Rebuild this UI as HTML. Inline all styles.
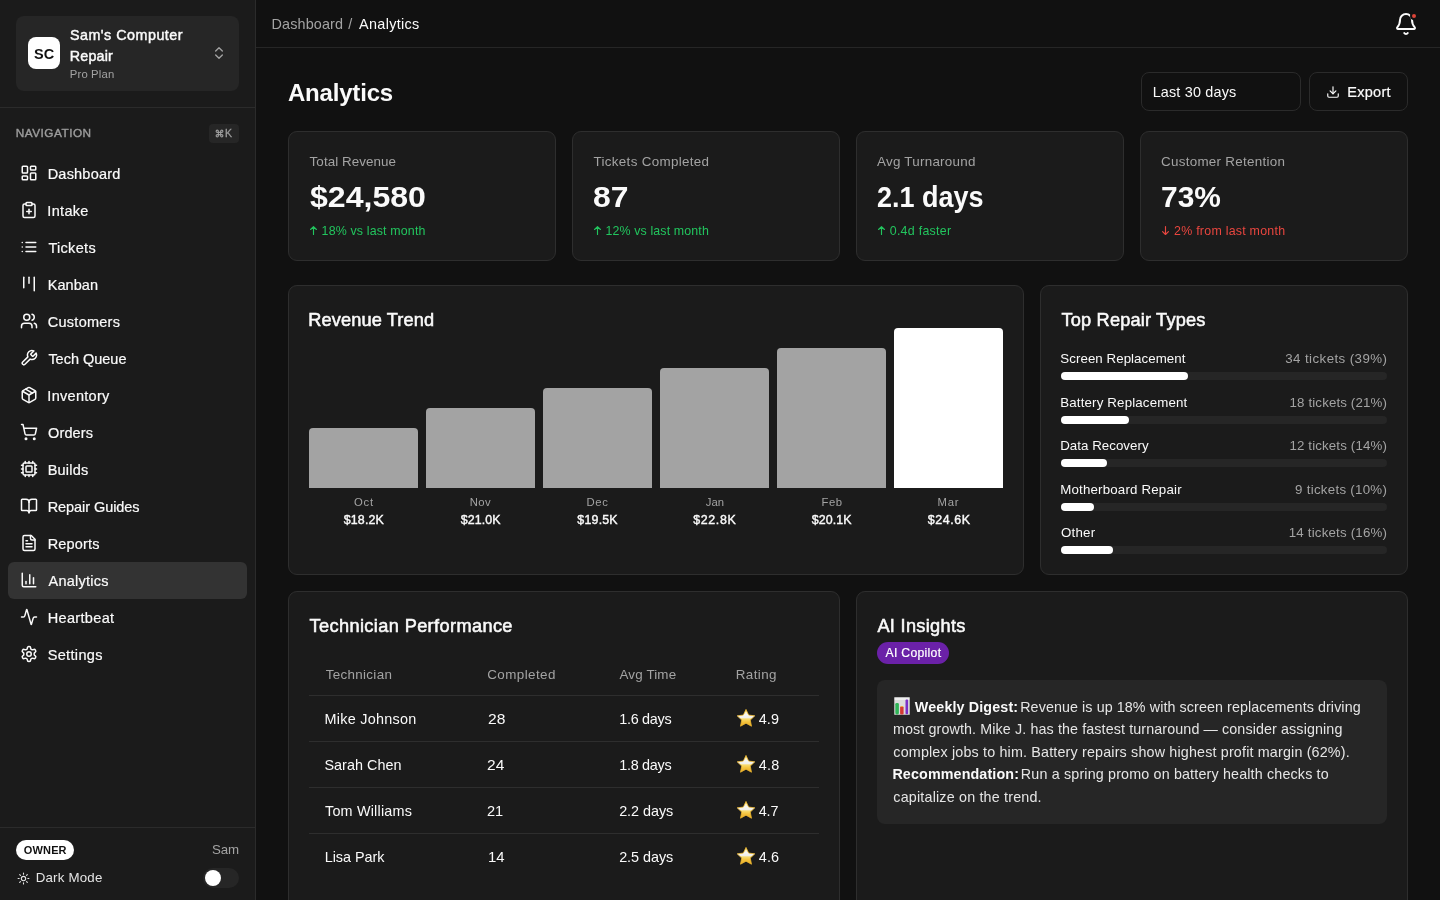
<!DOCTYPE html>
<html lang="en">
<head>
<meta charset="utf-8">
<title>Analytics</title>
<style>
*{box-sizing:border-box;margin:0;padding:0}
html,body{width:1440px;height:900px;overflow:hidden;background:#111111;color:#fafafa;font-family:"Liberation Sans",sans-serif}
#root{position:absolute;left:0;top:0;width:1440px;height:900px;will-change:transform}
svg.i{fill:none;stroke:currentColor;stroke-width:2;stroke-linecap:round;stroke-linejoin:round;display:block;flex:none}
span{white-space:nowrap}
/* ---------- sidebar ---------- */
#sb{position:absolute;left:0;top:0;width:256px;height:900px;background:#1b1b1b;border-right:1px solid #2b2b2b}
#org{position:absolute;left:16px;top:16px;width:223px;height:75px;background:#262626;border-radius:8px}
#logo{position:absolute;left:12px;top:21px;width:32px;height:32px;border-radius:8px;background:#fff;color:#111;font-weight:700;font-size:14px;line-height:34px;padding-left:6px}
#orgname{position:absolute;left:54px;top:9px;font-size:14.3px;line-height:21px;font-weight:400;-webkit-text-stroke:0.45px #fafafa;color:#fafafa;white-space:nowrap}
#orgplan{position:absolute;left:54px;top:50px;font-size:11.3px;line-height:16.5px;color:#a3a3a3}
#orgchev{position:absolute;left:195px;top:29px;color:#a3a3a3}
#sbdiv1{position:absolute;left:0;top:107px;width:255px;height:1px;background:#2b2b2b}
#navlbl{position:absolute;left:16px;top:125px;font-size:11.8px;line-height:16px;font-weight:400;-webkit-text-stroke:0.4px #9c9c9c;color:#9c9c9c}
#kbd{position:absolute;left:209px;top:124px;width:30px;height:19px;border-radius:4px;background:#262626;color:#9c9c9c;font-size:10.5px;line-height:19px;font-weight:400;-webkit-text-stroke:0.3px #9c9c9c}
#kbd svg{position:absolute;left:6px;top:5px}
#kbd span{position:absolute;left:16px;top:0}
#nav{position:absolute;left:8px;top:155px;width:239px}
.ni{position:absolute;left:0;width:239px;height:37px;border-radius:6px;font-size:14.5px;line-height:37px;color:#fafafa;-webkit-text-stroke:0.2px #fafafa}
.ni.on{background:#333333}
.ni svg{position:absolute;left:12px;top:9px}
.ni span{position:absolute;left:40px;top:1px}
#sbdiv2{position:absolute;left:0;top:827px;width:255px;height:1px;background:#2b2b2b}
#owner{position:absolute;left:16px;top:840px;width:58px;height:20px;border-radius:10px;background:#fff;color:#111;font-size:11px;font-weight:700;line-height:20px;padding-left:8px}
#uname{position:absolute;left:212px;top:841px;font-size:13.3px;line-height:18px;color:#a3a3a3}
#dm{position:absolute;left:16px;top:868px;height:20px;font-size:13.3px;line-height:20px;color:#e5e5e5}
#dm svg{position:absolute;left:0.5px;top:3.5px}
#dm span{position:absolute;left:20px;top:0}
#tog{position:absolute;left:203px;top:868px;width:36px;height:20px;border-radius:10px;background:#262626}
#tog i{position:absolute;left:2px;top:2px;width:16px;height:16px;border-radius:50%;background:#fff}
/* ---------- topbar ---------- */
#tb{position:absolute;left:256px;top:0;width:1184px;height:48px;border-bottom:1px solid #262626;background:#111}
#bc{position:absolute;left:0;top:14px;font-size:14.4px;line-height:20px;color:#a3a3a3;white-space:nowrap}
#bc span{position:absolute;top:0}
#bc1{left:16px}#bc2{left:92px}#bc3{left:103px;color:#fafafa}
#bell{position:absolute;left:1138px;top:12px;color:#fafafa}
#dot{position:absolute;left:1154px;top:12px;width:8px;height:8px;border-radius:50%;background:#dc4438;border:2px solid #111}
/* ---------- main ---------- */
#main{position:absolute;left:256px;top:48px;width:1184px;height:852px;overflow:hidden}
#h1{position:absolute;left:32px;top:29px;font-size:24px;line-height:32px;font-weight:700;color:#fafafa;white-space:nowrap}
#sel{position:absolute;left:885px;top:24px;width:160px;height:39px;border:1px solid #2b2b2b;border-radius:8px;font-size:14.4px;line-height:39px;padding-left:12px;color:#fafafa;white-space:nowrap}
#exp{position:absolute;left:1053px;top:24px;width:99px;height:39px;border:1px solid #2b2b2b;border-radius:8px;font-size:14.5px;line-height:39px;color:#fafafa;white-space:nowrap;-webkit-text-stroke:0.2px #fafafa}
#exp svg{position:absolute;left:16px;top:12px}
#exp span{position:absolute;left:38px;top:0}
.card{position:absolute;background:#1b1b1b;border:1px solid #2e2e2e;border-radius:9px}
.st{top:83px;width:268px;height:130px}
.st .l{position:absolute;left:20px;top:20px;font-size:13.4px;line-height:20px;color:#a3a3a3;white-space:nowrap}
.st .v{position:absolute;left:20px;top:44px;font-size:28.6px;line-height:42px;font-weight:700;color:#fafafa;white-space:nowrap}
.st .d{position:absolute;left:20px;top:90px;font-size:12.4px;line-height:18px;color:#22c55e;white-space:nowrap}
.st .d.dn{color:#e9463f}
.st .d svg{position:absolute;left:0;top:3px;fill:none;stroke:currentColor;stroke-width:1.15;stroke-linecap:round;stroke-linejoin:round}
.st .d span{position:absolute;left:13px;top:0}
.ct{position:absolute;left:20px;top:21px;font-size:18.2px;line-height:27px;font-weight:400;-webkit-text-stroke:0.55px #fafafa;color:#fafafa;white-space:nowrap}
#rev{left:32px;top:237px;width:736px;height:290px}
.bar{position:absolute;width:109px;background:#a3a3a3;border-radius:4px 4px 0 0}
.bar.hi{background:#ffffff}
.bl{position:absolute;top:208px;width:109px;white-space:nowrap}
.bl .m{position:absolute;left:40px;top:0;font-size:11.3px;line-height:16px;color:#a3a3a3}
.bl .a{position:absolute;left:34px;top:17px;font-size:12.4px;line-height:18px;font-weight:400;-webkit-text-stroke:0.4px #fafafa;color:#fafafa}
#top{left:784px;top:237px;width:368px;height:290px}
.rr{position:absolute;left:20px;width:326px;height:32px}
.rr .n{position:absolute;left:0;top:1px;font-size:13.3px;line-height:20px;color:#fafafa;white-space:nowrap}
.rr .c{position:absolute;right:0;top:1px;font-size:13.3px;line-height:20px;color:#a3a3a3;white-space:nowrap}
.rr .t{position:absolute;left:0;top:24px;width:326px;height:8px;border-radius:4px;background:#262626}
.rr .f{position:absolute;left:0;top:24px;height:8px;border-radius:4px;background:#ffffff}
#tech{left:32px;top:543px;width:552px;height:330px}
#tbl{position:absolute;left:20px;top:58px;width:510px}
.tr{position:relative;height:46px;border-bottom:1px solid #2e2e2e;font-size:14.4px;line-height:47px;color:#fafafa;white-space:nowrap}
.tr.h{color:#a3a3a3;font-size:13.4px;line-height:50.5px}
.tr.last{border-bottom:0}
.tr div{position:absolute;top:0}
.c1{left:16px}.c2{left:178px}.c3{left:310px}.c4{left:427px}
.star{position:absolute;left:1px;top:13px;overflow:visible}
.c4 span{position:absolute;left:22px;top:0}
#ai{left:600px;top:543px;width:552px;height:330px}
#badge{position:absolute;left:20px;top:50px;width:72px;height:22px;border-radius:11px;background:#6b21a8;color:#fff;font-size:12.2px;line-height:22px;padding-left:9px;-webkit-text-stroke:0.2px #fff;white-space:nowrap}
#box{position:absolute;left:20px;top:88px;width:510px;height:144px;border-radius:8px;background:#262626;padding:16px;font-size:14.3px;line-height:22.4px;color:#e5e5e5}
#box b{color:#fafafa;font-weight:700}
#box .ln{white-space:nowrap;height:22.4px}
#box .em{display:inline-block;vertical-align:-3px;margin-left:1px;margin-right:4px}
.sp{margin-left:4px}

/* per-text tuning */
#n0{letter-spacing:0.213px;margin-left:-0.33px}
#n1{letter-spacing:0.317px;margin-left:-0.68px}
#n2{letter-spacing:0.317px;margin-left:0.38px}
#n3{letter-spacing:0.076px;margin-left:-0.33px}
#n4{letter-spacing:0.244px;margin-left:-0.17px}
#n5{letter-spacing:-0.013px;margin-left:0.38px}
#n6{letter-spacing:0.299px;margin-left:-0.68px}
#n7{letter-spacing:0.164px;margin-left:-0.06px}
#n8{letter-spacing:0.217px;margin-left:-0.35px}
#n9{letter-spacing:-0.070px;margin-left:-0.33px}
#n10{letter-spacing:0.177px;margin-left:-0.33px}
#n11{letter-spacing:0.252px;margin-left:0.50px}
#n12{letter-spacing:0.343px;margin-left:-0.33px}
#n13{letter-spacing:0.355px;margin-left:-0.38px}
#on1{letter-spacing:0.509px;margin-left:-0.08px}
#on2{letter-spacing:0.185px;margin-left:-0.22px}
#pp{letter-spacing:0.158px;margin-left:-0.24px}
#nl{letter-spacing:0.491px;margin-left:-0.31px}
#sc{transform:scaleX(1.0356);display:inline-block;transform-origin:left center;margin-left:-0.12px}
#ow{letter-spacing:0.130px;margin-left:-0.15px}
#un{letter-spacing:-0.157px;margin-left:0.12px}
#dmt{letter-spacing:0.210px;margin-left:-0.38px}
#bc1{letter-spacing:0.154px;margin-left:-0.59px}
#bc2{margin-left:0.15px}
#bc3{letter-spacing:0.340px;margin-left:-0.00px}
#h1t{letter-spacing:-0.195px;margin-left:-0.03px}
#selt{letter-spacing:0.180px;margin-left:-1.38px}
#expt{letter-spacing:0.313px;margin-left:-0.84px}
#sl0{letter-spacing:0.071px;margin-left:0.61px}
#sv0{transform:scaleX(1.1217);display:inline-block;transform-origin:left center;margin-left:1.05px}
#sd0{letter-spacing:0.159px;margin-left:-0.41px}
#sl1{letter-spacing:0.325px;margin-left:0.49px}
#sv1{transform:scaleX(1.1143);display:inline-block;transform-origin:left center;margin-left:0.11px}
#sd1{letter-spacing:0.133px;margin-left:-0.57px}
#sl2{letter-spacing:0.256px;margin-left:-0.00px}
#sv2{transform:scaleX(0.9431);display:inline-block;transform-origin:left center;margin-left:0.40px}
#sd2{letter-spacing:0.284px;margin-left:-0.30px}
#sl3{letter-spacing:0.287px;margin-left:0.00px}
#sv3{transform:scaleX(1.0458);display:inline-block;transform-origin:left center;margin-left:-0.28px}
#sd3{letter-spacing:0.248px;margin-left:0.08px}
#ct1{letter-spacing:0.128px;margin-left:-0.75px}
#ct2{letter-spacing:0.176px;margin-left:0.51px}
#ct3{letter-spacing:0.372px;margin-left:0.56px}
#ct4{letter-spacing:0.307px;margin-left:0.41px}
#rn0{letter-spacing:0.053px;margin-left:-0.66px}
#rn1{letter-spacing:0.158px;margin-left:-0.78px}
#rn2{letter-spacing:0.033px;margin-left:-0.78px}
#rn3{letter-spacing:0.181px;margin-left:-0.78px}
#rn4{letter-spacing:0.245px;margin-left:-0.06px}
#rc0{letter-spacing:0.424px;margin-right:-0.36px}
#rc1{letter-spacing:0.129px;margin-right:0.00px}
#rc2{letter-spacing:0.140px;margin-right:0.00px}
#rc3{letter-spacing:0.279px;margin-right:-0.18px}
#rc4{letter-spacing:0.195px;margin-right:-0.18px}
#th1{letter-spacing:0.325px;margin-left:0.67px}
#th2{letter-spacing:0.412px;margin-left:0.29px}
#th3{letter-spacing:0.156px;margin-left:0.47px}
#th4{letter-spacing:0.420px;margin-left:-0.33px}
#t0a{letter-spacing:0.264px;margin-left:-0.54px}
#t1a{letter-spacing:0.032px;margin-left:-0.59px}
#t2a{letter-spacing:0.188px;margin-left:0.04px}
#t3a{letter-spacing:-0.018px;margin-left:-0.35px}
#t0b{transform:scaleX(1.0863);display:inline-block;transform-origin:left center;margin-left:0.62px}
#t1b{transform:scaleX(1.0779);display:inline-block;transform-origin:left center;margin-left:-0.05px}
#t2b{transform:scaleX(1.0134);display:inline-block;transform-origin:left center;margin-left:-0.08px}
#t3b{transform:scaleX(1.0368);display:inline-block;transform-origin:left center;margin-left:0.98px}
#t0c{letter-spacing:-0.286px;margin-left:0.22px}
#t1c{letter-spacing:-0.286px;margin-left:0.22px}
#t2c{letter-spacing:-0.039px;margin-left:0.13px}
#t3c{letter-spacing:-0.039px;margin-left:0.13px}
#t0d{letter-spacing:0.125px;margin-left:0.63px}
#t1d{letter-spacing:0.261px;margin-left:0.63px}
#t2d{letter-spacing:-0.099px;margin-left:0.63px}
#t3d{letter-spacing:0.248px;margin-left:0.63px}
#bdg{letter-spacing:0.296px;margin-left:-0.46px}
#a1b{letter-spacing:0.135px;margin-left:0.87px}
#a1{letter-spacing:0.087px;margin-left:2.00px}
#a2{letter-spacing:0.112px;margin-left:0.02px}
#a3{letter-spacing:0.176px;margin-left:0.35px}
#a4b{letter-spacing:0.129px;margin-left:-0.60px}
#a4{letter-spacing:0.166px;margin-left:1.78px}
#a5{letter-spacing:0.189px;margin-left:0.35px}
#bm0{letter-spacing:0.791px;margin-left:4.94px}
#ba0{letter-spacing:0.171px;margin-left:0.75px}
#bm1{letter-spacing:0.322px;margin-left:3.85px}
#ba1{letter-spacing:0.112px;margin-left:0.75px}
#bm2{letter-spacing:0.680px;margin-left:3.52px}
#ba2{letter-spacing:0.203px;margin-left:0.35px}
#bm3{letter-spacing:0.125px;margin-left:5.69px}
#ba3{letter-spacing:0.603px;margin-left:-0.65px}
#bm4{letter-spacing:0.611px;margin-left:4.40px}
#ba4{letter-spacing:0.112px;margin-left:0.75px}
#bm5{letter-spacing:0.720px;margin-left:3.54px}
#ba5{letter-spacing:0.589px;margin-left:-0.25px}
</style>
</head>
<body>
<div id="root">
<div id="sb">
  <div id="org">
    <div id="logo"><span id="sc">SC</span></div>
    <div id="orgname"><span id="on1">Sam's Computer</span><br><span id="on2">Repair</span></div>
    <div id="orgplan"><span id="pp">Pro Plan</span></div>
    <svg class="i" width="16" height="16" viewBox="0 0 24 24" id="orgchev"><path d="m7 15 5 5 5-5"/><path d="m7 9 5-5 5 5"/></svg>
  </div>
  <div id="sbdiv1"></div>
  <div id="navlbl"><span id="nl">NAVIGATION</span></div>
  <div id="kbd"><svg width="9" height="9" viewBox="0 0 24 24" fill="none" stroke="currentColor" stroke-width="3" stroke-linecap="round" stroke-linejoin="round"><path d="M15 6v12a3 3 0 1 0 3-3H6a3 3 0 1 0 3 3V6a3 3 0 1 0-3 3h12a3 3 0 1 0-3-3"/></svg><span id="kk">K</span></div>
  <div id="nav">
    <div class="ni" style="top:0px"><svg class="i" width="18" height="18" viewBox="0 0 24 24"><rect width="7" height="9" x="3" y="3" rx="1"/><rect width="7" height="5" x="14" y="3" rx="1"/><rect width="7" height="9" x="14" y="12" rx="1"/><rect width="7" height="5" x="3" y="16" rx="1"/></svg><span id="n0">Dashboard</span></div>
    <div class="ni" style="top:37px"><svg class="i" width="18" height="18" viewBox="0 0 24 24"><rect width="8" height="4" x="8" y="2" rx="1" ry="1"/><path d="M16 4h2a2 2 0 0 1 2 2v14a2 2 0 0 1-2 2H6a2 2 0 0 1-2-2V6a2 2 0 0 1 2-2h2"/><path d="M9 14h6"/><path d="M12 17v-6"/></svg><span id="n1">Intake</span></div>
    <div class="ni" style="top:74px"><svg class="i" width="18" height="18" viewBox="0 0 24 24"><path d="M8 6h13"/><path d="M8 12h13"/><path d="M8 18h13"/><path d="M3 6h.01"/><path d="M3 12h.01"/><path d="M3 18h.01"/></svg><span id="n2">Tickets</span></div>
    <div class="ni" style="top:111px"><svg class="i" width="18" height="18" viewBox="0 0 24 24"><path d="M5 3v14"/><path d="M12 3v8"/><path d="M19 3v18"/></svg><span id="n3">Kanban</span></div>
    <div class="ni" style="top:148px"><svg class="i" width="18" height="18" viewBox="0 0 24 24"><path d="M16 21v-2a4 4 0 0 0-4-4H6a4 4 0 0 0-4 4v2"/><circle cx="9" cy="7" r="4"/><path d="M22 21v-2a4 4 0 0 0-3-3.87"/><path d="M16 3.13a4 4 0 0 1 0 7.75"/></svg><span id="n4">Customers</span></div>
    <div class="ni" style="top:185px"><svg class="i" width="18" height="18" viewBox="0 0 24 24"><path d="M14.7 6.3a1 1 0 0 0 0 1.4l1.6 1.6a1 1 0 0 0 1.4 0l3.77-3.77a6 6 0 0 1-7.94 7.94l-6.91 6.91a2.12 2.12 0 0 1-3-3l6.91-6.91a6 6 0 0 1 7.94-7.94l-3.76 3.76z"/></svg><span id="n5">Tech Queue</span></div>
    <div class="ni" style="top:222px"><svg class="i" width="18" height="18" viewBox="0 0 24 24"><path d="m7.5 4.27 9 5.15"/><path d="M21 8a2 2 0 0 0-1-1.73l-7-4a2 2 0 0 0-2 0l-7 4A2 2 0 0 0 3 8v8a2 2 0 0 0 1 1.73l7 4a2 2 0 0 0 2 0l7-4A2 2 0 0 0 21 16Z"/><path d="m3.3 7 8.7 5 8.7-5"/><path d="M12 22V12"/></svg><span id="n6">Inventory</span></div>
    <div class="ni" style="top:259px"><svg class="i" width="18" height="18" viewBox="0 0 24 24"><circle cx="8" cy="21" r="1"/><circle cx="19" cy="21" r="1"/><path d="M2.05 2.05h2l2.66 12.42a2 2 0 0 0 2 1.58h9.78a2 2 0 0 0 1.95-1.57l1.65-7.43H5.12"/></svg><span id="n7">Orders</span></div>
    <div class="ni" style="top:296px"><svg class="i" width="18" height="18" viewBox="0 0 24 24"><path d="M12 20v2"/><path d="M12 2v2"/><path d="M17 20v2"/><path d="M17 2v2"/><path d="M2 12h2"/><path d="M2 17h2"/><path d="M2 7h2"/><path d="M20 12h2"/><path d="M20 17h2"/><path d="M20 7h2"/><path d="M7 20v2"/><path d="M7 2v2"/><rect x="4" y="4" width="16" height="16" rx="2"/><rect x="8" y="8" width="8" height="8" rx="1"/></svg><span id="n8">Builds</span></div>
    <div class="ni" style="top:333px"><svg class="i" width="18" height="18" viewBox="0 0 24 24"><path d="M12 7v14"/><path d="M3 18a1 1 0 0 1-1-1V4a1 1 0 0 1 1-1h5a4 4 0 0 1 4 4 4 4 0 0 1 4-4h5a1 1 0 0 1 1 1v13a1 1 0 0 1-1 1h-6a3 3 0 0 0-3 3 3 3 0 0 0-3-3z"/></svg><span id="n9">Repair Guides</span></div>
    <div class="ni" style="top:370px"><svg class="i" width="18" height="18" viewBox="0 0 24 24"><path d="M15 2H6a2 2 0 0 0-2 2v16a2 2 0 0 0 2 2h12a2 2 0 0 0 2-2V7Z"/><path d="M14 2v4a2 2 0 0 0 2 2h4"/><path d="M10 9H8"/><path d="M16 13H8"/><path d="M16 17H8"/></svg><span id="n10">Reports</span></div>
    <div class="ni on" style="top:407px"><svg class="i" width="18" height="18" viewBox="0 0 24 24"><path d="M3 3v16a2 2 0 0 0 2 2h16"/><path d="M18 17V9"/><path d="M13 17V5"/><path d="M8 17v-3"/></svg><span id="n11">Analytics</span></div>
    <div class="ni" style="top:444px"><svg class="i" width="18" height="18" viewBox="0 0 24 24"><path d="M22 12h-2.48a2 2 0 0 0-1.93 1.46l-2.35 8.36a.25.25 0 0 1-.48 0L9.24 2.18a.25.25 0 0 0-.48 0l-2.35 8.36A2 2 0 0 1 4.49 12H2"/></svg><span id="n12">Heartbeat</span></div>
    <div class="ni" style="top:481px"><svg class="i" width="18" height="18" viewBox="0 0 24 24"><path d="M12.22 2h-.44a2 2 0 0 0-2 2v.18a2 2 0 0 1-1 1.73l-.43.25a2 2 0 0 1-2 0l-.15-.08a2 2 0 0 0-2.73.73l-.22.38a2 2 0 0 0 .73 2.73l.15.1a2 2 0 0 1 1 1.72v.51a2 2 0 0 1-1 1.74l-.15.09a2 2 0 0 0-.73 2.73l.22.38a2 2 0 0 0 2.73.73l.15-.08a2 2 0 0 1 2 0l.43.25a2 2 0 0 1 1 1.73V20a2 2 0 0 0 2 2h.44a2 2 0 0 0 2-2v-.18a2 2 0 0 1 1-1.73l.43-.25a2 2 0 0 1 2 0l.15.08a2 2 0 0 0 2.73-.73l.22-.39a2 2 0 0 0-.73-2.73l-.15-.08a2 2 0 0 1-1-1.74v-.5a2 2 0 0 1 1-1.74l.15-.09a2 2 0 0 0 .73-2.73l-.22-.38a2 2 0 0 0-2.73-.73l-.15.08a2 2 0 0 1-2 0l-.43-.25a2 2 0 0 1-1-1.73V4a2 2 0 0 0-2-2z"/><circle cx="12" cy="12" r="3"/></svg><span id="n13">Settings</span></div>
  </div>
  <div id="sbdiv2"></div>
  <div id="owner"><span id="ow">OWNER</span></div>
  <div id="uname"><span id="un">Sam</span></div>
  <div id="dm"><svg class="i" width="13" height="13" viewBox="0 0 24 24"><circle cx="12" cy="12" r="4"/><path d="M12 2v2"/><path d="M12 20v2"/><path d="m4.93 4.93 1.41 1.41"/><path d="m17.66 17.66 1.41 1.41"/><path d="M2 12h2"/><path d="M20 12h2"/><path d="m6.34 17.66-1.41 1.41"/><path d="m19.07 4.93-1.41 1.41"/></svg><span id="dmt">Dark Mode</span></div>
  <div id="tog"><i></i></div>
</div>

<div id="tb">
  <div id="bc"><span id="bc1">Dashboard</span><span id="bc2">/</span><span id="bc3">Analytics</span></div>
  <svg class="i" width="24" height="24" viewBox="0 0 24 24" id="bell"><path d="M10.268 21a2 2 0 0 0 3.464 0"/><path d="M3.262 15.326A1 1 0 0 0 4 17h16a1 1 0 0 0 .74-1.673C19.41 13.956 18 12.499 18 8A6 6 0 0 0 6 8c0 4.499-1.411 5.956-2.738 7.326"/></svg>
  <div id="dot"></div>
</div>

<div id="main">
<div id="h1"><span id="h1t">Analytics</span></div>
<div id="sel"><span id="selt">Last 30 days</span></div>
<div id="exp"><svg class="i" width="14" height="14" viewBox="0 0 24 24"><path d="M21 15v4a2 2 0 0 1-2 2H5a2 2 0 0 1-2-2v-4"/><path d="m7 10 5 5 5-5"/><path d="M12 15V3"/></svg><span id="expt">Export</span></div>
<div class="card st" style="left:32px"><div class="l"><span id="sl0">Total Revenue</span></div><div class="v"><span id="sv0">$24,580</span></div><div class="d"><svg class="ar" width="9" height="11" viewBox="0 0 9 11"><path d="M4.5 9.5V1.6M1.6 4.5 4.5 1.6l2.9 2.9"/></svg><span id="sd0">18% vs last month</span></div></div>
<div class="card st" style="left:316px"><div class="l"><span id="sl1">Tickets Completed</span></div><div class="v"><span id="sv1">87</span></div><div class="d"><svg class="ar" width="9" height="11" viewBox="0 0 9 11"><path d="M4.5 9.5V1.6M1.6 4.5 4.5 1.6l2.9 2.9"/></svg><span id="sd1">12% vs last month</span></div></div>
<div class="card st" style="left:600px"><div class="l"><span id="sl2">Avg Turnaround</span></div><div class="v"><span id="sv2">2.1 days</span></div><div class="d"><svg class="ar" width="9" height="11" viewBox="0 0 9 11"><path d="M4.5 9.5V1.6M1.6 4.5 4.5 1.6l2.9 2.9"/></svg><span id="sd2">0.4d faster</span></div></div>
<div class="card st" style="left:884px"><div class="l"><span id="sl3">Customer Retention</span></div><div class="v"><span id="sv3">73%</span></div><div class="d dn"><svg class="ar" width="9" height="11" viewBox="0 0 9 11"><path d="M4.5 1.6V9.5M1.6 6.6 4.5 9.5l2.9-2.9"/></svg><span id="sd3">2% from last month</span></div></div>

<div class="card" id="rev">
  <div class="ct"><span id="ct1">Revenue Trend</span></div>
  <div class="bar" style="left:20px;top:142px;height:60px"></div>
  <div class="bl" style="left:20px"><div class="m"><span id="bm0">Oct</span></div><div class="a"><span id="ba0">$18.2K</span></div></div>
  <div class="bar" style="left:137px;top:122px;height:80px"></div>
  <div class="bl" style="left:137px"><div class="m"><span id="bm1">Nov</span></div><div class="a"><span id="ba1">$21.0K</span></div></div>
  <div class="bar" style="left:254px;top:102px;height:100px"></div>
  <div class="bl" style="left:254px"><div class="m"><span id="bm2">Dec</span></div><div class="a"><span id="ba2">$19.5K</span></div></div>
  <div class="bar" style="left:371px;top:82px;height:120px"></div>
  <div class="bl" style="left:371px"><div class="m"><span id="bm3">Jan</span></div><div class="a"><span id="ba3">$22.8K</span></div></div>
  <div class="bar" style="left:488px;top:62px;height:140px"></div>
  <div class="bl" style="left:488px"><div class="m"><span id="bm4">Feb</span></div><div class="a"><span id="ba4">$20.1K</span></div></div>
  <div class="bar hi" style="left:605px;top:42px;height:160px"></div>
  <div class="bl" style="left:605px"><div class="m"><span id="bm5">Mar</span></div><div class="a"><span id="ba5">$24.6K</span></div></div>
</div>
<div class="card" id="top">
  <div class="ct"><span id="ct2">Top Repair Types</span></div>
  <div class="rr" style="top:62.0px"><div class="n"><span id="rn0">Screen Replacement</span></div><div class="c"><span id="rc0">34 tickets (39%)</span></div><div class="t"></div><div class="f" style="width:127px"></div></div>
  <div class="rr" style="top:105.5px"><div class="n"><span id="rn1">Battery Replacement</span></div><div class="c"><span id="rc1">18 tickets (21%)</span></div><div class="t"></div><div class="f" style="width:68px"></div></div>
  <div class="rr" style="top:149.0px"><div class="n"><span id="rn2">Data Recovery</span></div><div class="c"><span id="rc2">12 tickets (14%)</span></div><div class="t"></div><div class="f" style="width:46px"></div></div>
  <div class="rr" style="top:192.5px"><div class="n"><span id="rn3">Motherboard Repair</span></div><div class="c"><span id="rc3">9 tickets (10%)</span></div><div class="t"></div><div class="f" style="width:33px"></div></div>
  <div class="rr" style="top:236.0px"><div class="n"><span id="rn4">Other</span></div><div class="c"><span id="rc4">14 tickets (16%)</span></div><div class="t"></div><div class="f" style="width:52px"></div></div>
</div>
<div class="card" id="tech">
  <div class="ct"><span id="ct3">Technician Performance</span></div>
  <div id="tbl">
    <div class="tr h"><div class="c1"><span id="th1">Technician</span></div><div class="c2"><span id="th2">Completed</span></div><div class="c3"><span id="th3">Avg Time</span></div><div class="c4"><span id="th4" style="left:0">Rating</span></div></div>
    <div class="tr"><div class="c1"><span id="t0a">Mike Johnson</span></div><div class="c2"><span id="t0b">28</span></div><div class="c3"><span id="t0c">1.6 days</span></div><div class="c4"><svg class="star" width="18" height="18" viewBox="0 0 18 18"><defs><linearGradient id="sg" x1="0" y1="0" x2="0" y2="1"><stop offset="0" stop-color="#f4c63a"/><stop offset="0.2" stop-color="#fdf3c4"/><stop offset="0.3" stop-color="#f6f6f4"/><stop offset="0.5" stop-color="#f1efe9"/><stop offset="0.56" stop-color="#f8dd72"/><stop offset="0.75" stop-color="#f3c23c"/><stop offset="1" stop-color="#e9a825"/></linearGradient></defs><path d="M9.00 0.40 L11.65 6.06 L17.84 6.83 L13.28 11.09 L14.47 17.22 L9.00 14.20 L3.53 17.22 L4.72 11.09 L0.16 6.83 L6.35 6.06 Z" fill="url(#sg)" stroke="#eeb931" stroke-width="0.8" stroke-linejoin="round"/></svg><span id="t0d">4.9</span></div></div>
    <div class="tr"><div class="c1"><span id="t1a">Sarah Chen</span></div><div class="c2"><span id="t1b">24</span></div><div class="c3"><span id="t1c">1.8 days</span></div><div class="c4"><svg class="star" width="18" height="18" viewBox="0 0 18 18"><path d="M9.00 0.40 L11.65 6.06 L17.84 6.83 L13.28 11.09 L14.47 17.22 L9.00 14.20 L3.53 17.22 L4.72 11.09 L0.16 6.83 L6.35 6.06 Z" fill="url(#sg)" stroke="#eeb931" stroke-width="0.8" stroke-linejoin="round"/></svg><span id="t1d">4.8</span></div></div>
    <div class="tr"><div class="c1"><span id="t2a">Tom Williams</span></div><div class="c2"><span id="t2b">21</span></div><div class="c3"><span id="t2c">2.2 days</span></div><div class="c4"><svg class="star" width="18" height="18" viewBox="0 0 18 18"><path d="M9.00 0.40 L11.65 6.06 L17.84 6.83 L13.28 11.09 L14.47 17.22 L9.00 14.20 L3.53 17.22 L4.72 11.09 L0.16 6.83 L6.35 6.06 Z" fill="url(#sg)" stroke="#eeb931" stroke-width="0.8" stroke-linejoin="round"/></svg><span id="t2d">4.7</span></div></div>
    <div class="tr last"><div class="c1"><span id="t3a">Lisa Park</span></div><div class="c2"><span id="t3b">14</span></div><div class="c3"><span id="t3c">2.5 days</span></div><div class="c4"><svg class="star" width="18" height="18" viewBox="0 0 18 18"><path d="M9.00 0.40 L11.65 6.06 L17.84 6.83 L13.28 11.09 L14.47 17.22 L9.00 14.20 L3.53 17.22 L4.72 11.09 L0.16 6.83 L6.35 6.06 Z" fill="url(#sg)" stroke="#eeb931" stroke-width="0.8" stroke-linejoin="round"/></svg><span id="t3d">4.6</span></div></div>
  </div>
</div>
<div class="card" id="ai">
  <div class="ct"><span id="ct4">AI Insights</span></div>
  <div id="badge"><span id="bdg">AI Copilot</span></div>
  <div id="box">
    <div class="ln"><svg class="em" width="16" height="18" viewBox="0 0 16 18"><rect x="0.3" y="0.3" width="15.4" height="17.4" rx="0.8" fill="#dcdcdc" stroke="#b4b4b4" stroke-width="0.6"/><rect x="0.8" y="0.8" width="14.4" height="2.2" fill="#efefef"/><rect x="1.3" y="6" width="3.6" height="11.4" rx="1.3" fill="#2fb457"/><rect x="6.1" y="9.6" width="3.5" height="7.8" rx="0.9" fill="#d43a34"/><rect x="6.6" y="9.1" width="2.5" height="1" rx="0.5" fill="#efb13a"/><rect x="11.5" y="2.6" width="2.6" height="14.6" rx="1" fill="#7a2fc8"/></svg><b id="a1b">Weekly Digest:</b><span id="a1" class="sp">Revenue is up 18% with screen replacements driving</span></div>
    <div class="ln"><span id="a2">most growth. Mike J. has the fastest turnaround &mdash; consider assigning</span></div>
    <div class="ln"><span id="a3">complex jobs to him. Battery repairs show highest profit margin (62%).</span></div>
    <div class="ln"><b id="a4b">Recommendation:</b><span id="a4" class="sp">Run a spring promo on battery health checks to</span></div>
    <div class="ln"><span id="a5">capitalize on the trend.</span></div>
  </div>
</div>
</div>
</div>
</body>
</html>
